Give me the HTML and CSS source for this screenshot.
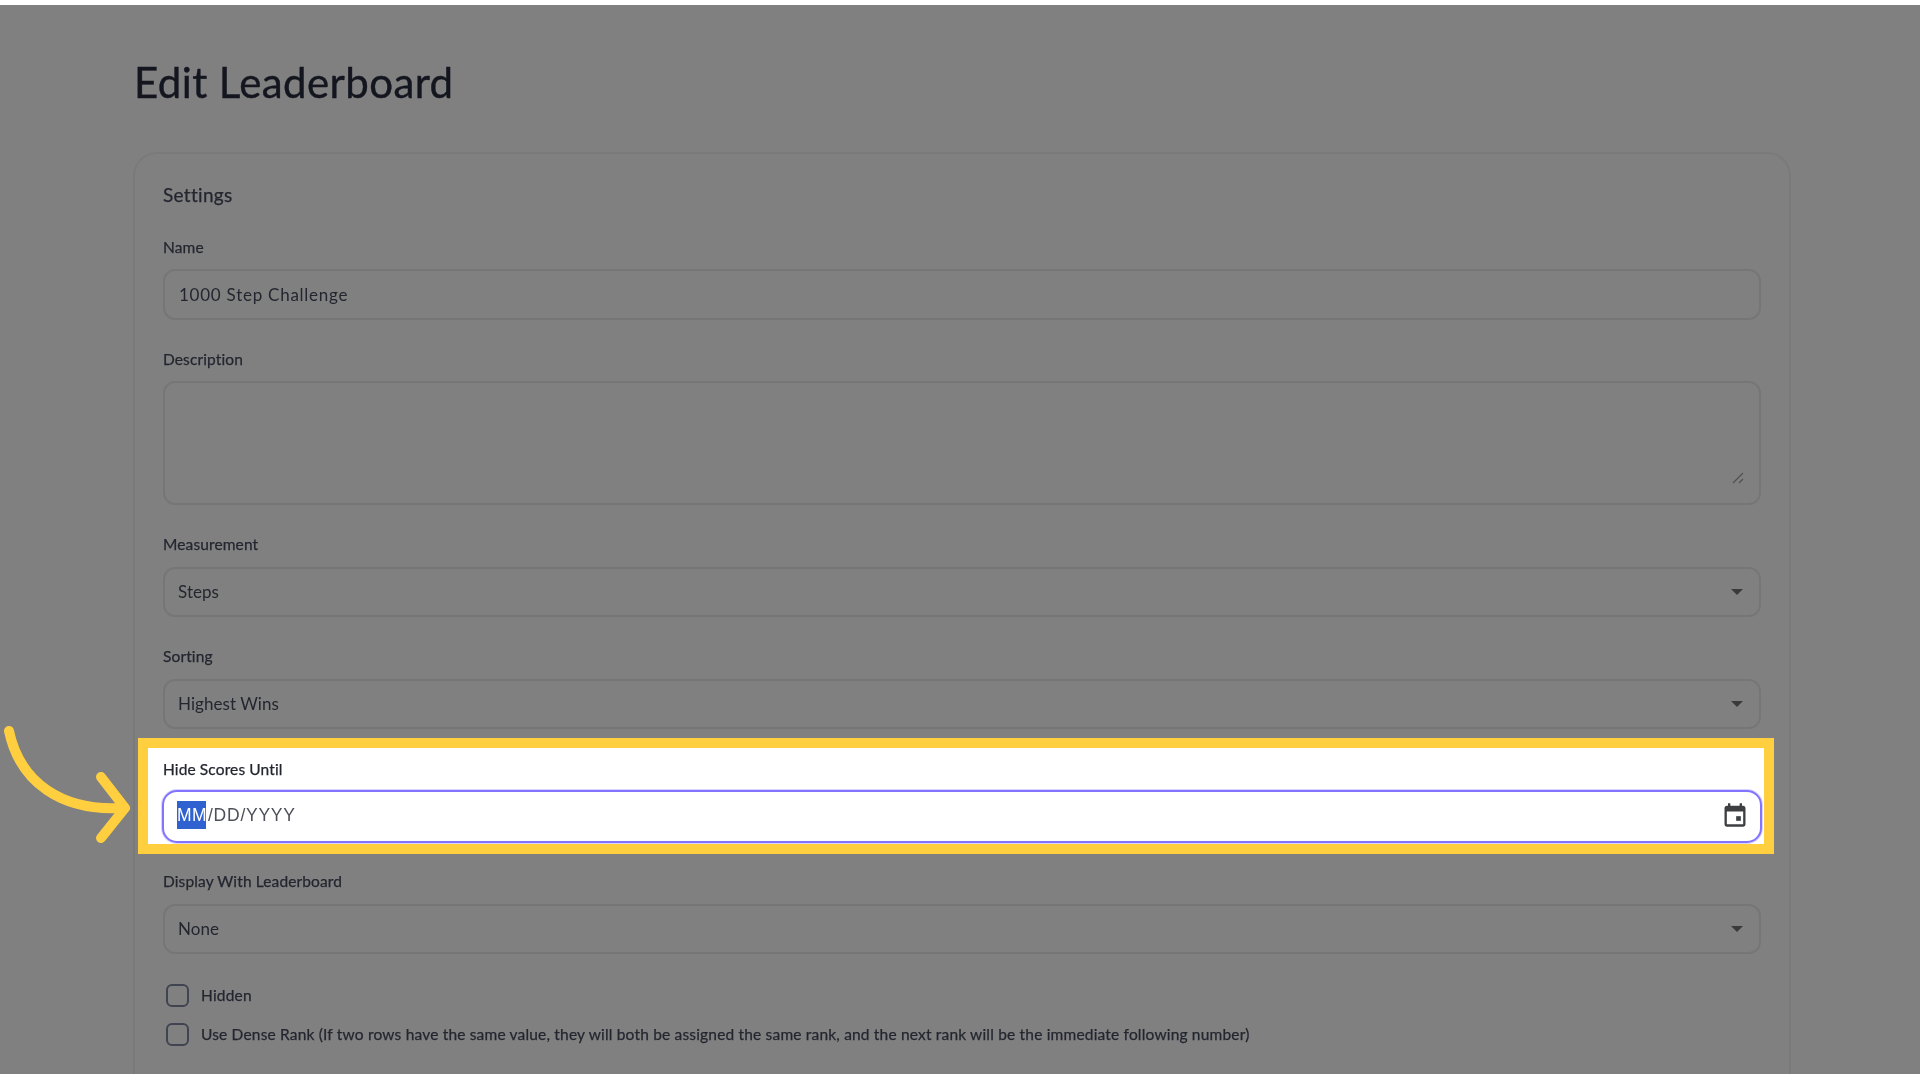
FILE: index.html
```html
<!DOCTYPE html>
<html lang="en">

<head>
    <meta charset="UTF-8">
    <meta name="viewport" content="width=device-width, initial-scale=1.0">
    <title>Edit Leaderboard</title>
    <link rel="stylesheet" href="styles.css">
</head>

<body>
    <main class="page">
        <h1 class="title">Edit Leaderboard</h1>
        <section class="card">
            <h2 class="card-title">Settings</h2>
            <div class="fields">
                <div class="field">
                    <label class="label">Name</label>
                    <div class="input text">1000 Step Challenge</div>
                </div>
                <div class="field">
                    <label class="label">Description</label>
                    <div class="input textarea">
                        <svg class="grip" viewBox="0 0 12 12"><path d="M1 11 11 1M7 11l4-4"></path></svg>
                    </div>
                </div>
                <div class="field">
                    <label class="label">Measurement</label>
                    <div class="input select">Steps<span class="caret"></span></div>
                </div>
                <div class="field">
                    <label class="label">Sorting</label>
                    <div class="input select">Highest Wins<span class="caret"></span></div>
                </div>
                <div class="field highlight">
                    <label class="label">Hide Scores Until</label>
                    <div class="input date">
                        <span class="date-text"><span class="date-sel">MM</span>/DD/YYYY</span>
                        <svg class="cal" viewBox="0 0 24 24"><path d="M19 4h-1V2h-2v2H8V2H6v2H5c-1.1 0-2 .9-2 2v14c0 1.1.9 2 2 2h14c1.1 0 2-.9 2-2V6c0-1.1-.9-2-2-2zm0 16H5V9h14v11z"></path><path d="M13 13h4v4h-4z"></path></svg>
                    </div>
                </div>
                <div class="field">
                    <label class="label">Display With Leaderboard</label>
                    <div class="input select">None<span class="caret"></span></div>
                </div>
            </div>
            <div class="checks">
                <div class="check"><span class="box"></span><span class="check-text">Hidden</span></div>
                <div class="check"><span class="box"></span><span class="check-text">Use Dense Rank (If two rows have the same value, they will both be assigned the same rank, and the next rank will be the immediate following number)</span></div>
            </div>
        </section>
    </main>
    <svg class="arrow" viewBox="0 0 140 130">
        <path d="M9 6C20 58 62 86 121 83"></path>
        <path d="M101 52 125 83 101 113"></path>
    </svg>
</body>

</html>
```
FILE: styles.css
```css
* {
    margin: 0;
    padding: 0;
    box-sizing: border-box;
}

html,
body {
    height: 100%;
    overflow: hidden;
}

body {
    background: #fff;
    font-family: "Lato", "Liberation Sans", sans-serif;
    color: #23262f;
    position: relative;
}

.page {
    margin-top: 5px;
    height: 1069px;
    overflow: hidden;
    background: #808080;
    padding: 53px 129px 0 133px;
}

/* the reference is an upscaled capture, its text and thin lines are soft */
.title,
.card-title,
.label,
.input,
.box,
.check-text {
    filter: blur(.5px);
}

.title {
    font-size: 42px;
    font-weight: 400;
    line-height: 48px;
    letter-spacing: .4px;
    color: #14161f;
    -webkit-text-stroke: .4px #14161f;
    margin: 0 0 46px 1px;
}

.card {
    height: 1000px;
    border: 2px solid #7a7a7a;
    border-radius: 24px;
    padding: 28px 28px 0;
}

.card-title {
    font-size: 19px;
    font-weight: 400;
    line-height: 26px;
    letter-spacing: .3px;
    -webkit-text-stroke: .25px #23262f;
    margin-bottom: 29.5px;
}

.fields {
    display: flex;
    flex-direction: column;
    gap: 30px;
}

.label {
    display: block;
    font-size: 15.5px;
    line-height: 18px;
    letter-spacing: .12px;
    -webkit-text-stroke: .25px #23262f;
    margin-bottom: 13.5px;
}

.input {
    display: flex;
    align-items: center;
    justify-content: space-between;
    height: 50.5px;
    border: 2px solid #767676;
    border-radius: 12px;
    padding: 0 14px;
    font-size: 17px;
}

.text {
    letter-spacing: .75px;
}

.select {
    padding-left: 13px;
    letter-spacing: .05px;
}

.textarea {
    height: 124px;
    align-items: flex-end;
    justify-content: flex-end;
    padding: 0 15px 19px;
}

.grip {
    width: 12px;
    height: 12px;
    fill: none;
    stroke: #505050;
    stroke-width: 1.2;
}

.caret {
    width: 0;
    height: 0;
    border-left: 6px solid transparent;
    border-right: 6px solid transparent;
    border-top: 6px solid #3a3a3a;
    margin-right: 2px;
}

/* yellow box round the field the step is about */
.highlight {
    margin: -21px -13px -12px -25px;
    border: 10px solid #ffcf40;
    background: #fff;
    padding: 12px 2px 1px 15px;
}

.highlight .label {
    margin-bottom: 12px;
}

.date {
    height: 53px;
    margin-left: -1px;
    background: #fff;
    border-color: #8374ff;
    border-radius: 15px;
    box-shadow: 0 0 0 1px #d8d4ff;
    padding: 0 11px 0 13px;
    color: #4d5059;
}

.date-text {
    font-family: "Liberation Sans", sans-serif;
    font-size: 17.5px;
    letter-spacing: .75px;
    margin-top: -3px;
}

.date-sel {
    display: inline-block;
    height: 28px;
    line-height: 28px;
    width: 29px;
    margin-right: 2px;
    background: #2f62d0;
    color: #fff;
    letter-spacing: .4px;
}

.cal {
    width: 28px;
    height: 28px;
    margin-top: -3px;
    fill: #3c4043;
}

.checks {
    display: flex;
    flex-direction: column;
    gap: 16px;
    margin-top: 30px;
    padding-left: 3px;
}

.check {
    display: flex;
    align-items: center;
    gap: 12px;
    height: 23px;
    font-size: 15.5px;
}

.check-text {
    letter-spacing: .18px;
    margin-top: -2px;
    -webkit-text-stroke: .25px #23262f;
}

.box {
    width: 23px;
    height: 23px;
    border: 2.5px solid #3f4450;
    border-radius: 6px;
}

.arrow {
    position: absolute;
    left: 0;
    top: 725px;
    width: 140px;
    height: 130px;
    fill: none;
    stroke: #ffcf40;
    stroke-width: 10;
    stroke-linecap: round;
    stroke-linejoin: round;
}
```
